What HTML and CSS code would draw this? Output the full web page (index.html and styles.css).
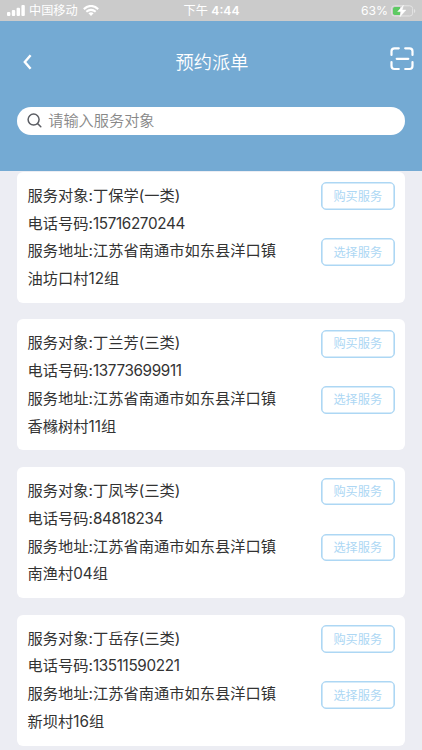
FILE: index.html
```
<!DOCTYPE html>
<html lang="zh-CN">
<head>
<meta charset="utf-8">
<title>预约派单</title>
<link rel="stylesheet" href="styles.css">
</head>
<body>
<header class="header">
  <div class="status">
    <div class="status-left">
      <svg class="signal" width="18" height="11" viewBox="0 0 18 11" fill="#fff"><rect x="0" y="7" width="3.4" height="4" rx="1"/><rect x="4.8" y="5" width="3.4" height="6" rx="1"/><rect x="9.6" y="2.7" width="3.4" height="8.3" rx="1"/><rect x="14.4" y="0" width="3.4" height="11" rx="1"/></svg>
      <span class="carrier">中国移动</span>
      <svg class="wifi" width="16" height="11" viewBox="0 0 16 11" fill="none" stroke="#fff" stroke-width="2.1"><path d="M.8 4.1Q8-2.2 15.2 4.1"/><path d="M3.3 6.8Q8 2.8 12.7 6.8"/><path d="M8 11 5.4 8.3Q8 6.3 10.6 8.3Z" fill="#fff" stroke="none"/></svg>
    </div>
    <span class="time">下午 <b>4:44</b></span>
    <div class="status-right">
      <span class="percent">63%</span>
      <svg width="25" height="12" viewBox="0 0 25 12"><rect x=".6" y=".8" width="21" height="10.2" rx="2.8" fill="none" stroke="#e4e4e4"/><path d="M3.8 2H9v8H3.8Q2 10 2 8.2V3.8Q2 2 3.8 2Z" fill="#5dca63"/><path d="M23 4q1.3.5 1.3 2T23 8Z" fill="#e4e4e4"/><path d="M12.4.2 6.7 6.6h3.7L8.9 11.8l6-6.7h-3.8Z" fill="#fff" stroke="#fff" stroke-width=".5"/></svg>
    </div>
  </div>
  <nav class="nav">
    <svg class="back" width="10" height="16" viewBox="0 0 10 16" fill="none" stroke="#fff" stroke-width="2.4"><path d="M8.6 1.2 2.8 8l5.8 6.8"/></svg>
    <h1 class="title">预约派单</h1>
    <svg class="scan" width="24" height="24" viewBox="0 0 24 24" fill="none" stroke="#fff" stroke-width="2.2" stroke-linecap="round"><path d="M1.5 8V4.3Q1.5 1.3 4.5 1.3h4.3M15.2 1.3h4.3q3 0 3 3V8M22.5 15v4q0 3-3 3h-4.3M8.8 22H4.5q-3 0-3-3v-4M6.7 11.8h11.6"/></svg>
  </nav>
  <div class="search">
    <svg width="15" height="15" viewBox="0 0 15 15" fill="none" stroke="#5b5d63" stroke-width="1.5" stroke-linecap="round"><circle cx="6.6" cy="6.6" r="5.5"/><path d="m10.8 10.8 3 3"/></svg>
    <span>请输入服务对象</span>
  </div>
</header>
<main class="list">
  <article class="card">
    <div class="info"><p>服务对象:丁保学(一类)</p><p>电话号码:<span class="num">15716270244</span></p><p>服务地址:江苏省南通市如东县洋口镇油坊口村12组</p></div>
    <div class="actions"><button>购买服务</button><button>选择服务</button></div>
  </article>
  <article class="card">
    <div class="info"><p>服务对象:丁兰芳(三类)</p><p>电话号码:<span class="num">13773699911</span></p><p>服务地址:江苏省南通市如东县洋口镇香橼树村11组</p></div>
    <div class="actions"><button>购买服务</button><button>选择服务</button></div>
  </article>
  <article class="card">
    <div class="info"><p>服务对象:丁凤岑(三类)</p><p>电话号码:<span class="num">84818234</span></p><p>服务地址:江苏省南通市如东县洋口镇南渔村04组</p></div>
    <div class="actions"><button>购买服务</button><button>选择服务</button></div>
  </article>
  <article class="card">
    <div class="info"><p>服务对象:丁岳存(三类)</p><p>电话号码:<span class="num">13511590221</span></p><p>服务地址:江苏省南通市如东县洋口镇新坝村16组</p></div>
    <div class="actions"><button>购买服务</button><button>选择服务</button></div>
  </article>
</main>
</body>
</html>
```
FILE: styles.css
```
* { box-sizing: border-box; }
body {
  margin: 0;
  height: 750px;
  overflow: hidden;
  background: #ecedf3;
  color: #333;
  font-family: Inter, "Noto Sans CJK SC", sans-serif;
}
p, h1 { margin: 0; }
svg { display: block; flex: none; }
.header { height: 171.3px; background: #74aad3; }
.status {
  display: grid;
  grid-template-columns: 1fr auto 1fr;
  align-items: center;
  height: 21px;
  padding: 0 6px 0 7px;
  background: #cbcbcb;
  color: #fff;
  font-size: 12.2px;
  line-height: 21px;
}
.status-left, .status-right { display: flex; align-items: center; }
.carrier { margin: 0 5px 0 4px; }
.time b { font-weight: 600; }
.status-right { justify-content: flex-end; gap: 3px; }
.nav {
  display: grid;
  grid-template-columns: 1fr auto 1fr;
  align-items: center;
  height: 82px;
  padding: 0 8px 0 11px;
}
.back { margin-left: 10.5px; }
.title { margin-left: -1px; color: #fff; font-size: 18.2px; font-weight: 350; line-height: 28px; }
.scan { justify-self: end; margin-top: -7px; }
.search {
  display: flex;
  align-items: center;
  gap: 6px;
  height: 27.5px;
  margin: 4px 17.2px 0;
  padding-left: 10px;
  border-radius: 14px;
  background: #fff;
  color: #888;
  font-size: 15.2px;
  font-weight: 350;
  line-height: 27px;
}
.list { display: flex; flex-direction: column; gap: 16.6px; padding: .5px 17.2px 0; }
.card {
  display: flex;
  flex: none;
  justify-content: space-between;
  height: 131px;
  padding: 10px 10.3px 0;
  border-radius: 6px;
  background: #fff;
}
.info { width: 252px; font-size: 15.25px; line-height: 27.8px; }
.num { letter-spacing: -.35px; }
.actions { display: flex; flex-direction: column; gap: 28.4px; padding-top: .7px; }
.actions button {
  width: 73.5px;
  height: 27.6px;
  padding: 1px 0 0;
  border: 1px solid #add7f4;
  border-radius: 5px;
  background: #fff;
  box-shadow: inset 0 0 0 .6px #add7f4;
  color: #add7f4;
  font: 400 12.2px/24px Inter, "Noto Sans CJK SC", sans-serif;
}
```
